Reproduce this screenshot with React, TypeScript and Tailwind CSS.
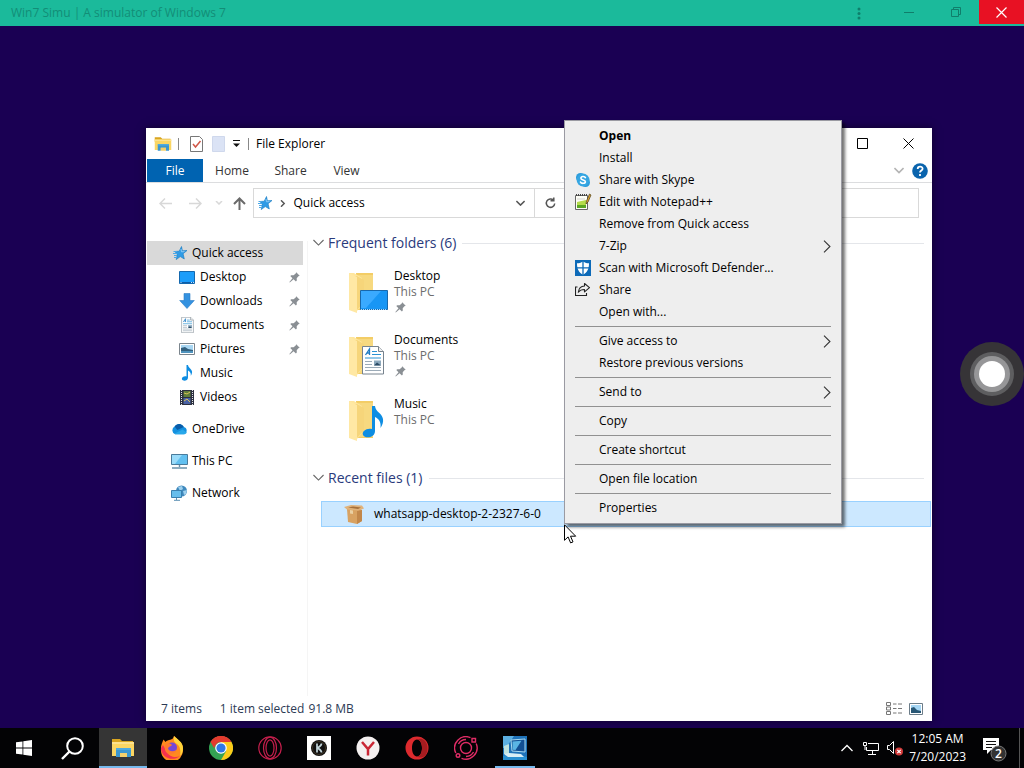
import type { ReactNode } from "react";

const SkypeIcon = () => (
  <svg width="16" height="16" viewBox="0 0 16 16">
    <rect x="1" y="1" width="9" height="9" rx="4.5" fill="#2c9cdb" />
    <rect x="6" y="6" width="9" height="9" rx="4.5" fill="#2c9cdb" />
    <circle cx="8" cy="8" r="6.4" fill="#35a6e2" />
    <path d="M10.400 5.600C9.800 4.200 5.900 4 5.900 6.200c0 2.100 4.500 1.300 4.500 3.500 0 2.200-4.200 2-4.900.4" fill="none" stroke="#fff" strokeWidth="1.6" strokeLinecap="round" />
  </svg>
);

const NotepadIcon = () => (
  <svg width="18" height="18" viewBox="0 0 18 18">
    <path d="M.5 2.500h12v14H.5z" fill="#fdfdf5" stroke="#666" />
    <path d="M2 9l9-2v8H2z" fill="#b4dc4a" />
    <path d="M2 12h9v3H2z" fill="#5aa623" />
    <path d="M1 2h12" stroke="#444" strokeWidth="2" strokeDasharray="1 1" />
    <path d="M2.500 6h7" stroke="#aaa" strokeDasharray="1 1" />
    <path d="M14.500 1l-3 7-.5 3 2-2 3-7z" fill="#e0a72c" stroke="#4a3b18" strokeWidth=".7" />
  </svg>
);

const DefenderIcon = () => (
  <svg width="16" height="16" viewBox="0 0 16 16">
    <path d="M0 0h16v16H0z" fill="#0d6ab8" />
    <path d="M8 1.500c2 1.300 4 1.800 6 1.800 0 5.500-1.500 9-6 11.400C3.500 12.300 2 8.800 2 3.300c2 0 4-.5 6-1.800z" fill="#fff" />
    <path d="M8 1v14M1 7.800h14" stroke="#0d6ab8" strokeWidth="1.300" />
  </svg>
);

const ShareIcon = () => (
  <svg width="16" height="16" viewBox="0 0 16 16" fill="none" stroke="#222" strokeWidth="1.100">
    <path d="M2.500 5H.5v8.500h11V11" />
    <path d="M9.500 1.500l5 4.200-5 4.200V7.500c-3 0-4.700.7-6.200 2.700.5-4 2.700-6 6.200-6.200z" strokeLinejoin="round" />
  </svg>
);

const StarIcon = () => (
  <svg width="16" height="16" viewBox="0 0 16 16">
    <path d="M9.500 1.500l.9 4.300 4.600-.3-3.900 3.200 1.200 5.300-4-2.400-4.100 3 1.100-4.900-2.300-3.200 4.200-.3z" fill="#2f9be6" stroke="#1478c0" strokeWidth=".6" />
    <path d="M1.500 6.500H5M1 8.500h4M2 10.500h3M2 12.500h2.500" stroke="#4aa8e8" />
    <path d="M9 4l.5 2.800 3-.2" stroke="#8ccaf5" fill="none" />
  </svg>
);

const PinIcon = () => (
  <svg width="11" height="11" viewBox="0 0 11 11" fill="#8a8f94">
    <path d="M7.200.3l3.500 3.500-1.300.4-1.700 2 .1 2.300-.9.900-2.300-2.200L.8 10.500l-.4-.4 3.100-3.900L1.300 4.100l.9-.9 2.400.1 2.100-1.800z" />
  </svg>
);

const DesktopIcon = () => (
  <svg width="16" height="13" viewBox="0 0 16 13">
    <path d="M.5.5h15v12H.5z" fill="#1c9dfa" stroke="#1468ae" />
    <path d="M1 11.500h14" stroke="#0d5ca8" />
    <path d="M1.500 11.500h2M12 11.500h3" stroke="#c4e5ff" strokeDasharray="1 1" />
  </svg>
);

const DownloadIcon = () => (
  <svg width="16" height="16" viewBox="0 0 16 16">
    <path d="M5 .5h6v7h4.300L8 15.500.7 7.500H5z" fill="#3492e0" stroke="#2a7cc6" strokeWidth=".6" />
  </svg>
);

const DocumentArt = () => (
  <>
    <path d="M.5.500h16l5 5v22.500H.5z" fill="#fff" stroke="#77838e" />
    <path d="M16.500.5v5h5" fill="#eee" stroke="#77838e" />
    <path d="M3.500 9L7.500 3v6M5 7h3" fill="none" stroke="#217cc4" strokeWidth="1.300" />
    <path d="M10 5.500h5M10 8.500h9M3 12h16" stroke="#2992d3" strokeWidth="1.200" />
    <path d="M3 15.500h7M3 18.500h7M3 21.500h16M3 24.500h16" stroke="#9cabb8" strokeWidth="1.200" />
    <path d="M12 14.500h7v5h-7z" fill="#8da9bd" />
    <path d="M12 19.500l3-3 4 3z" fill="#2c4c66" />
  </>
);

const DocumentIcon = () => (
  <svg width="13" height="16" viewBox="0 0 22 28.500"><DocumentArt /></svg>
);

const PictureIcon = () => (
  <svg width="16" height="12" viewBox="0 0 16 12">
    <path d="M.5.5h15v11H.5z" fill="#fff" stroke="#7b858d" />
    <path d="M2 2h12v8H2z" fill="#a9d7f3" />
    <path d="M2 5l4-1 3 2 5 1v3H2z" fill="#33607e" />
    <path d="M2 8h12v2H2z" fill="#4f93bd" />
  </svg>
);

const MusicArt = () => (
  <path d="M8 0c.5 6 7 7 8 13 .5 3-.5 6-2.500 9 .8-6-1.500-9-5.500-11v14c0 7-10 8-12 4-1.500-4 4-7.500 9-6V0z" fill="#0e8de2" />
);

const MusicIcon = () => (
  <svg width="12" height="16" viewBox="-5 0 22 32"><MusicArt /></svg>
);

const VideoIcon = () => (
  <svg width="14" height="15" viewBox="0 0 14 15">
    <path d="M0 0h14v15H0z" fill="#2d3140" />
    <path d="M1.500 0v15M12.500 0v15" stroke="#e2e5e9" strokeDasharray="1 1" />
    <path d="M3.500 1h7v6h-7z" fill="#607d3a" />
    <path d="M3.500 8h7v6h-7z" fill="#4a62a5" />
    <path d="M4 3l3 1 3-2M4 11l3-2 3 3" stroke="#d8c25a" fill="none" />
  </svg>
);

const CloudIcon = () => (
  <svg width="17" height="12" viewBox="0 0 16 11">
    <path d="M4 10.500a4 4 0 01-.6-7.300A5 5 0 0112 3.500a3.600 3.600 0 010 7z" fill="#1490df" />
    <path d="M3.400 3.200A5 5 0 0112 3.500L6 6.500z" fill="#0a5ca8" />
    <path d="M3 10l8-4 4 3-2 1.500H4z" fill="#28a8ea" />
  </svg>
);

const PcIcon = () => (
  <svg width="17" height="15" viewBox="0 0 17 15">
    <path d="M.5.5h16v10H.5z" fill="#62c0f0" stroke="#4a7b9b" />
    <path d="M1 1h10L4 10H1z" fill="#9bdcfa" />
    <path d="M8.500 11v2M1 14h15" stroke="#6a92ac" strokeWidth="1.400" />
  </svg>
);

const NetworkIcon = () => (
  <svg width="17" height="16" viewBox="0 0 17 16">
    <circle cx="10.500" cy="6" r="5.500" fill="#3f89bd" />
    <path d="M7 2l4-1 1 3-3 2zM12 6l4-1-1 4-2 1z" fill="#9ed0ee" />
    <path d="M.5 5.500h10v7H.5z" fill="#66bdec" stroke="#3a7fae" />
    <path d="M5.500 13v2M3 15.300h6" stroke="#5b8fb3" />
  </svg>
);

const ExplorerIcon = ({ size }: { size: number }) => (
  <svg width={size} height={size} viewBox="0 0 24 24">
    <path d="M1 3h8l2 2h11v4H1z" fill="#d9a520" />
    <path d="M1 6h22v14H1z" fill="#fbd663" />
    <path d="M1 6h22v2H1z" fill="#fde28e" />
    <path d="M5 13h15v8h-4v-4H9v4H5z" fill="#3c97cf" />
    <path d="M5 12h15v2H5z" fill="#4eaae0" />
    <path d="M9 17h7v4H9z" fill="#f4d06b" />
  </svg>
);

const FolderIcon = ({ children }: { children: ReactNode }) => (
  <svg className="mt-1" width="42" height="44" viewBox="0 0 42 44">
    <path d="M8 1h17v37H8z" fill="#f3cd66" />
    <path d="M10 3h15v34H10z" fill="#f7d980" />
    <path d="M1 1h5l8 5v27l-5 6-8-2z" fill="#ffe69d" />
    <path d="M7 4h2l7 4v22l-7 8z" fill="#f6d57a" />
    <path d="M1 1l8 4v36l-8-3z" fill="#ffe8a4" />
    {children}
  </svg>
);

const BoxIcon = () => (
  <svg width="20" height="20" viewBox="0 0 20 20">
    <path d="M3 5l12-1 3 2v11l-5 3-9-2z" fill="#d8a262" />
    <path d="M13 7l5-1v11l-5 3z" fill="#c2874a" />
    <path d="M0 3l7-2 11 .5 2 3-6 2L3 5.500z" fill="#e0b27a" />
    <path d="M4 3.500l5-1 8 1-3 1.500z" fill="#a5713c" />
    <path d="M6 6l3 .5V10l-3-.5z" fill="#ead0a3" />
  </svg>
);

const Chevron = ({ dir, color, w = 11, sw = 1.2 }: { dir: "down" | "right" | "up"; color: string; w?: number; sw?: number }) => (
  <svg
    width={dir === "right" ? w / 2 + 2 : w}
    height={dir === "right" ? w : w / 2 + 2}
    viewBox={dir === "right" ? "0 0 7 12" : "0 0 12 7"}
    fill="none"
    stroke={color}
    strokeWidth={sw}
  >
    <path d={dir === "right" ? "M.5.5L6 6 .5 11.500" : dir === "down" ? "M.5.5L6 6l5.500-5.500" : "M.5 6.500L6 1l5.500 5.500"} />
  </svg>
);

type MenuEntry = { label: string; icon?: ReactNode; bold?: boolean; sub?: boolean };
const menuGroups: MenuEntry[][] = [
  [
    { label: "Open", bold: true },
    { label: "Install" },
    { label: "Share with Skype", icon: <SkypeIcon /> },
    { label: "Edit with Notepad++", icon: <NotepadIcon /> },
    { label: "Remove from Quick access" },
    { label: "7-Zip", sub: true },
    { label: "Scan with Microsoft Defender...", icon: <DefenderIcon /> },
    { label: "Share", icon: <ShareIcon /> },
    { label: "Open with..." },
  ],
  [{ label: "Give access to", sub: true }, { label: "Restore previous versions" }],
  [{ label: "Send to", sub: true }],
  [{ label: "Copy" }],
  [{ label: "Create shortcut" }],
  [{ label: "Open file location" }],
  [{ label: "Properties" }],
];

function ContextMenu() {
  return (
    <div role="menu" className="absolute left-[564px] top-[120px] w-[278px] border border-[#9a9aa2] bg-[#eeeeee] px-[10px] py-1 shadow-[3px_3px_3px_rgba(0,0,0,0.55)]">
      {menuGroups.map((group, i) => (
        <div key={i} role="group" className={i > 0 ? "before:my-[3px] before:block before:h-px before:bg-[#919191]" : ""}>
          {group.map((item) => (
            <button key={item.label} role="menuitem" className="flex h-[22px] w-full items-center text-left">
              <span className="flex w-6 shrink-0">{item.icon}</span>
              <span className={item.bold ? "grow font-bold" : "grow"}>{item.label}</span>
              {item.sub && <Chevron dir="right" color="#333" w={13} sw={1} />}
            </button>
          ))}
        </div>
      ))}
    </div>
  );
}

const quickLinks = [
  { label: "Desktop", icon: <DesktopIcon />, pinned: true },
  { label: "Downloads", icon: <DownloadIcon />, pinned: true },
  { label: "Documents", icon: <DocumentIcon />, pinned: true },
  { label: "Pictures", icon: <PictureIcon />, pinned: true },
  { label: "Music", icon: <MusicIcon />, pinned: false },
  { label: "Videos", icon: <VideoIcon />, pinned: false },
];

const places = [
  { label: "OneDrive", icon: <CloudIcon /> },
  { label: "This PC", icon: <PcIcon /> },
  { label: "Network", icon: <NetworkIcon /> },
];

function Sidebar() {
  return (
    <nav className="w-[162px] shrink-0 border-r border-[#f5f5f5] pl-px">
      <a href="#quick" className="mr-1 flex h-6 items-center gap-1 bg-[#d9d9d9] pl-[25px]">
        <StarIcon />
        Quick access
      </a>
      {quickLinks.map((l) => (
        <a key={l.label} href="#folder" className="flex h-6 items-center pl-8 pr-[7px]">
          <span className="mr-[5px] flex w-4 justify-center">{l.icon}</span>
          <span className="grow">{l.label}</span>
          {l.pinned && <PinIcon />}
        </a>
      ))}
      {places.map((p) => (
        <a key={p.label} href="#place" className="mt-2 flex h-6 items-center gap-1 pl-6">
          <span className="flex w-[17px]">{p.icon}</span>
          {p.label}
        </a>
      ))}
    </nav>
  );
}

const folders = [
  {
    name: "Desktop",
    pinned: true,
    art: (
      <>
        <path d="M12.500 18.500h27v19h-27z" fill="#1796f5" stroke="#1868ac" />
        <path d="M13 19h20L18 36h-5z" fill="#3aaaff" />
        <path d="M13 37.500h26" stroke="#a9dcff" strokeDasharray="1 1" />
      </>
    ),
  },
  { name: "Documents", pinned: true, art: <g transform="translate(14 10)"><DocumentArt /></g> },
  { name: "Music", pinned: false, art: <g transform="translate(19 6)"><MusicArt /></g> },
];

const SectionTitle = ({ children }: { children: ReactNode }) => (
  <h2 className="flex h-6 items-center pl-[5px] pr-2 text-[14px] text-[#2a3a7c]">
    <span className="mr-1"><Chevron dir="down" color="#666" /></span>
    {children}
    <span className="ml-[6px] h-px grow bg-[#e4e6ea]" />
  </h2>
);

function ExplorerWindow() {
  return (
    <section className="flex grow flex-col bg-white text-black shadow-[0_0_8px_rgba(0,0,0,0.5)]">
      <header className="flex h-[31px] items-center pl-2">
        <ExplorerIcon size={18} />
        <span className="ml-[6px] h-3 w-px bg-[#888]" />
        <svg className="ml-[11px]" width="13" height="16" viewBox="0 0 13 16" fill="none">
          <path d="M.5.5h9l3 3v12H.5z" fill="#fff" stroke="#777" />
          <path d="M3 8l2.500 3L10.500 5" stroke="#d05748" strokeWidth="1.500" />
        </svg>
        <svg className="ml-[9px]" width="13" height="16" viewBox="0 0 13 16">
          <path d="M.5.5h12v15H.5z" fill="#dbe3f5" stroke="#cfd8ec" />
        </svg>
        <svg className="ml-[7px]" width="9" height="8" viewBox="0 0 9 8">
          <path d="M1 .5h7" stroke="#111" />
          <path d="M1 3.500h7L4.500 7z" fill="#111" />
        </svg>
        <span className="ml-[7px] h-3 w-px bg-[#888]" />
        <h1 className="ml-[7px] grow">File Explorer</h1>
        <button aria-label="Maximize" className="flex w-[46px] justify-center">
          <svg width="11" height="11" fill="none" stroke="#000"><path d="M.5.5h10v10H.5z" /></svg>
        </button>
        <button aria-label="Close" className="mr-px flex w-[46px] justify-center">
          <svg width="11" height="11" fill="none" stroke="#000"><path d="M.5.5l10 10M10.500.5l-10 10" /></svg>
        </button>
      </header>

      <div className="flex h-6 items-stretch border-b border-[#dcdddf] pl-px text-[#333]">
        <button className="w-14 bg-[#0063b1] text-white">File</button>
        <button className="w-[58px]">Home</button>
        <button className="w-[59px]">Share</button>
        <button className="w-[53px]">View</button>
        <span className="grow" />
        <button aria-label="Expand ribbon" className="px-2"><Chevron dir="down" color="#b4b4b4" w={10} sw={2} /></button>
        <button aria-label="Help" className="mr-1">
          <svg width="16" height="16" viewBox="0 0 16 16">
            <circle cx="8" cy="8" r="7.800" fill="#0a64ad" />
            <path d="M5.700 6c0-3.200 4.900-3 4.900-.3C10.600 7.500 8 7.500 8 9.500M8 11v2" fill="none" stroke="#fff" strokeWidth="1.800" />
          </svg>
        </button>
      </div>

      <div className="flex h-10 items-center px-[13px]">
        <button aria-label="Back" className="w-[30px]">
          <svg width="13" height="11" fill="none" stroke="#d8d8d8" strokeWidth="1.500"><path d="M13 5.500H1M6 .5l-5 5 5 5" /></svg>
        </button>
        <button aria-label="Forward" className="w-[26px]">
          <svg width="13" height="11" fill="none" stroke="#d8d8d8" strokeWidth="1.500"><path d="M0 5.500h12M7 .5l5 5-5 5" /></svg>
        </button>
        <button aria-label="Recent locations" className="w-[18px]">
          <svg width="8" height="4" fill="none" stroke="#d8d8d8" strokeWidth="1.500"><path d="M1 0l3 3 3-3" /></svg>
        </button>
        <button aria-label="Up" className="w-5">
          <svg width="13" height="13" fill="none" stroke="#6a6a6a" strokeWidth="2"><path d="M6.500 13V1.500M1 7l5.500-5.500L12 7" /></svg>
        </button>
        <div className="flex h-[30px] w-[313px] items-center border border-[#d9d9d9] pl-[3px]">
          <StarIcon />
          <span className="mx-[7px]"><Chevron dir="right" color="#555" w={7} sw={2.500} /></span>
          <span className="grow pl-px">Quick access</span>
          <button aria-label="Previous locations" className="px-[9px]"><Chevron dir="down" color="#555" w={9} sw={2} /></button>
          <button aria-label="Refresh" className="flex h-full w-[31px] items-center justify-center border-l border-[#d9d9d9]">
            <svg width="11" height="12" viewBox="0 0 11 12" fill="none" stroke="#555" strokeWidth="1.500">
              <path d="M8.500 3.200A4.200 4.200 0 109.700 6.500M8.800.500v3.200H5.500" />
            </svg>
          </button>
        </div>
        <label className="ml-3 flex min-w-0 grow">
          <input type="search" aria-label="Search Quick access" className="h-[30px] min-w-0 grow border border-[#d9d9d9] px-2 outline-none" />
        </label>
      </div>

      <div className="flex grow">
        <div className="flex pt-[18px]"><Sidebar /></div>
        <main className="grow pt-2">
          <SectionTitle>Frequent folders (6)</SectionTitle>
          <ul className="pl-10 pt-[13px]">
            {folders.map((f) => (
              <li key={f.name} className="flex h-16 gap-1">
                <FolderIcon>{f.art}</FolderIcon>
                <div className="leading-4">
                  <p>{f.name}</p>
                  <p className="text-[#6d6d6d]">This PC</p>
                  {f.pinned && <span className="flex pt-[2px] pl-px"><PinIcon /></span>}
                </div>
              </li>
            ))}
          </ul>
          <div className="mt-[6px]"><SectionTitle>Recent files (1)</SectionTitle></div>
          <button className="ml-[13px] mt-[11px] flex h-[26px] w-[calc(100%-14px)] items-center gap-[10px] border border-[#99d1ff] bg-[#cce8ff] pl-[22px]">
            <BoxIcon />
            whatsapp-desktop-2-2327-6-0
          </button>
        </main>
      </div>

      <footer className="flex h-[25px] items-center pl-[15px] pr-[9px] text-[#2c3a55]">
        <span className="mr-[18px]">7 items</span>
        <span className="mr-1">1 item selected</span>
        <span className="grow">91.8 MB</span>
        <button aria-label="Details view" className="mr-[7px]">
          <svg width="16" height="13" viewBox="0 0 16 13" fill="none" stroke="#777">
            <path d="M.5.5h4v3h-4zM.5 5h4v3h-4zM.5 9.500h4v3h-4zM7 2h3.500M12 2h4M7 6.500h3.500M12 6.500h4M7 11h3.500M12 11h4" />
          </svg>
        </button>
        <button aria-label="Large icons view">
          <svg width="14" height="12" viewBox="0 0 14 12">
            <path d="M.5.5h13v11H.5z" fill="#fff" stroke="#6b7c88" />
            <path d="M2 2h10v8H2z" fill="#a6d7f5" />
            <path d="M2 5l3-1 3 3 4 1v2H2z" fill="#285775" />
          </svg>
        </button>
      </footer>
    </section>
  );
}

const apps: { name: string; bar?: string; active?: boolean; icon: ReactNode }[] = [
  { name: "File Explorer", active: true, bar: "w-12", icon: <ExplorerIcon size={24} /> },
  {
    name: "Firefox",
    icon: (
      <svg width="24" height="24" viewBox="0 0 24 24">
        <path d="M14 0c2 1 3 3 4 4.500 3 1.500 5.500 5 5 9.500a11 11 0 01-22 1C.5 10 2 7 3.500 3.500L5.500 6C8 3 13 5 14 0z" fill="#ff8a1e" />
        <path d="M14 0c3 3 9 6 9 12 0 4-1 6-3 8 1-5 0-10-3-12-2-1-4-3-3-8z" fill="#ffd43a" />
        <path d="M1 12c0 10 12 14 19 8-4 2-11 1-13-4L3 9z" fill="#f6314f" />
        <circle cx="12" cy="11.500" r="5" fill="#7547d8" />
        <path d="M5.500 8c2-1.500 5-1 6.500 1-1 1.500-3.500 1.500-4 3.500 1 3 5 3.500 8 1.500-1 5-7 6-10 2-1.500-2-1.500-5-.5-8z" fill="#ff7b2c" />
      </svg>
    ),
  },
  {
    name: "Chrome",
    icon: (
      <svg width="24" height="24" viewBox="0 0 24 24">
        <circle cx="12" cy="12" r="12" fill="#34a353" />
        <path d="M12 12L1.600 6a12 12 0 0120.800 0z" fill="#e33b2e" />
        <path d="M12 6h10.400A12 12 0 0112 24l5.200-9z" fill="#fccb1a" />
        <path d="M1.600 6L6.800 15 12 12V6z" fill="#34a353" />
        <path d="M1.600 6A12 12 0 0112 0a12 12 0 0110.400 6H12a6 6 0 00-5.500 3.500L5 12z" fill="#e33b2e" />
        <circle cx="12" cy="12" r="5.800" fill="#fff" />
        <circle cx="12" cy="12" r="4.600" fill="#2f78e6" />
      </svg>
    ),
  },
  {
    name: "Opera GX",
    icon: (
      <svg width="24" height="24" viewBox="0 0 24 24" fill="none" stroke="#c41f4c" strokeWidth="1.200">
        <circle cx="12" cy="12" r="11.200" />
        <ellipse cx="12" cy="12" rx="6.500" ry="10.800" />
        <ellipse cx="12" cy="12" rx="4" ry="8.200" />
      </svg>
    ),
  },
  {
    name: "Klwp",
    icon: (
      <svg width="24" height="24" viewBox="0 0 24 24">
        <path d="M0 0h24v24H0z" fill="#fff" />
        <circle cx="12" cy="12" r="8" fill="#111" />
        <circle cx="12" cy="12" r="6.500" fill="none" stroke="#5c4c2c" strokeWidth=".6" />
        <path d="M10 7.500v9M14.500 7.500c0 2.500-2.500 3.500-4 4.500 1.500 1 4 2 4 4.500" stroke="#c3d6da" strokeWidth="1.700" fill="none" />
      </svg>
    ),
  },
  {
    name: "Yandex",
    icon: (
      <svg width="24" height="24" viewBox="0 0 24 24">
        <circle cx="12" cy="12" r="11.500" fill="#f4f0f0" />
        <path d="M6 6l6 7 6-7M12 12.500V19.500" fill="none" stroke="#c92634" strokeWidth="2.500" />
      </svg>
    ),
  },
  {
    name: "Opera",
    icon: (
      <svg width="24" height="24" viewBox="0 0 24 24" fillRule="evenodd">
        <path d="M12 .5a11.500 11.500 0 100 23 11.500 11.500 0 000-23zm0 3c3 0 5 4 5 8.500s-2 8.500-5 8.500S7 16.500 7 12s2-8.500 5-8.500z" fill="#dc2a2e" />
        <path d="M12 3.500c3 0 5 4 5 8.500s-2 8.500-5 8.500c3 2 8 1 9.500-3 2-5 1-10-2-13-2-2-5-2-7.500-1z" fill="#a51c20" />
      </svg>
    ),
  },
  {
    name: "Orbit",
    icon: (
      <svg width="24" height="24" viewBox="0 0 24 24" fill="none" stroke="#e02c66" strokeWidth="1.400">
        <circle cx="12" cy="12" r="5.500" />
        <path d="M16.500 1.700A11.300 11.300 0 001.800 17M7.500 22.300A11.300 11.300 0 0022.200 7.500M4.500 8A8.600 8.600 0 0112 3.500M19.500 16a8.600 8.600 0 01-7.500 4.500" />
        <path d="M18 2.500h3.500V6H18z" />
        <circle cx="4" cy="19.500" r="1.800" />
      </svg>
    ),
  },
  {
    name: "Win7 Simu",
    bar: "w-10",
    icon: (
      <svg width="24" height="24" viewBox="0 0 24 24">
        <path d="M0 0h24v24H0z" fill="#1f72b8" />
        <path d="M0 0h11L3 12H0z" fill="#5cb0e2" />
        <path d="M0 20l8-3 16 4v3H0z" fill="#2a8fd0" />
        <path d="M8 4l14-1v13l-13-1z" fill="#124f93" stroke="#a8d9f0" />
        <path d="M9.500 5.500l9-.8-6 9.300-3-.3z" fill="#5ab4e4" />
        <path d="M1 10l5-2v10H1z" fill="#bfe3e0" />
        <path d="M1 18l5-1 12 1 3 3H5z" fill="#d9eef5" />
      </svg>
    ),
  },
];

function Taskbar() {
  return (
    <footer className="flex h-10 items-stretch bg-[#030305] text-white">
      <button aria-label="Start" className="flex w-12 items-center justify-center">
        <svg width="16" height="16" viewBox="0 0 16 16" fill="#fff">
          <path d="M0 2.300l6.500-.9v6.200H0zM7.300 1.300L16 0v7.600H7.300zM0 8.400h6.500v6.200L0 13.700zM7.300 8.400H16V16l-8.700-1.200z" />
        </svg>
      </button>
      <button aria-label="Search" className="mr-[3px] flex w-12 items-center justify-center">
        <svg width="23" height="23" viewBox="0 0 23 23" fill="none" stroke="#fff" strokeWidth="2">
          <circle cx="14" cy="9" r="7.800" />
          <path d="M8.500 14.500L1 22" strokeWidth="2.400" />
        </svg>
      </button>
      <div className="flex gap-px">
        {apps.map((a) => (
          <button
            key={a.name}
            aria-label={a.name}
            className={a.active ? "flex w-12 flex-col items-center bg-[#353535]" : "flex w-12 flex-col items-center"}
          >
            <span className="flex grow items-center">{a.icon}</span>
            {a.bar && <span className={`-mt-[2px] h-[2px] bg-[#76b9ed] ${a.bar}`} />}
          </button>
        ))}
      </div>
      <div className="ml-auto flex items-center">
        <button aria-label="Hidden icons" className="mr-[10px]"><Chevron dir="up" color="#fff" w={12} sw={1.300} /></button>
        <svg className="mr-2" width="16" height="14" viewBox="0 0 16 14" fill="none" stroke="#fff">
          <path d="M5 2.500h10.500v7H3.500V6M9.500 10v3M5 13.500h8M.5 1.500h3v3h-3zM2 5v4" />
        </svg>
        <svg className="mr-[6px]" width="16" height="15" viewBox="0 0 16 15" fill="none">
          <path d="M.5 4.500h2l4-4v12l-4-4h-2z" stroke="#fff" />
          <circle cx="12" cy="10.500" r="4" fill="#d23b3b" />
          <path d="M10.300 8.800l3.400 3.400M13.700 8.800l-3.400 3.400" stroke="#fff" strokeWidth="1.200" />
        </svg>
        <div className="mr-4 text-center leading-[18px]">
          <p>12:05 AM</p>
          <p>7/20/2023</p>
        </div>
        <button aria-label="2 notifications" className="mr-[11px]">
          <svg width="26" height="28" viewBox="0 0 26 28">
            <path d="M1 4h16v12H9l-4 4v-4H1z" fill="#fff" />
            <path d="M4 7.500h10M4 10.500h10M4 13.500h6" stroke="#111" />
            <circle cx="16.500" cy="19.500" r="7.500" fill="#333" stroke="#777" />
            <text x="16.500" y="24" fontSize="12" fontWeight="600" textAnchor="middle" fill="#fff">2</text>
          </svg>
        </button>
        <span className="mr-1 h-10 w-px bg-[#555]" />
      </div>
    </footer>
  );
}

export default function App() {
  return (
    <div className="relative flex min-h-screen flex-col overflow-hidden bg-[#1a0053] font-['Open_Sans','Noto_Sans',sans-serif] text-[12px] leading-4">
      <header className="flex h-[26px] items-start bg-[#1bba9b] pl-[11px] text-[#138d77]">
        <span className="grow pt-[5px]">Win7 Simu | A simulator of Windows 7</span>
        <button aria-label="More" className="flex h-[26px] w-10 items-center justify-center">
          <svg width="4" height="13" fill="#0e7f6b"><circle cx="2" cy="2" r="1.500" /><circle cx="2" cy="6.500" r="1.500" /><circle cx="2" cy="11" r="1.500" /></svg>
        </button>
        <button aria-label="Minimize app" className="ml-[6px] flex h-6 w-12 items-center justify-center">
          <svg width="10" height="1"><path d="M0 .5h10" stroke="#107e6b" /></svg>
        </button>
        <button aria-label="Restore app" className="flex h-6 w-[46px] items-center justify-center">
          <svg width="10" height="10" fill="none" stroke="#107e6b"><path d="M.5 2.500h7v7h-7zM2.500 2.500v-2h7v7h-2" /></svg>
        </button>
        <button aria-label="Close app" className="flex h-6 w-[45px] items-center justify-center bg-[#e81123]">
          <svg width="11" height="11" fill="none" stroke="#fff" strokeWidth="1.200"><path d="M.5.5l10 10M10.500.5l-10 10" /></svg>
        </button>
      </header>

      <div className="flex grow pb-[7px] pl-[146px] pr-[92px] pt-[102px]">
        <ExplorerWindow />
      </div>

      <Taskbar />

      <ContextMenu />

      <svg className="absolute left-[564px] top-[524px]" width="13" height="20" viewBox="0 0 13 20">
        <path d="M.5.800v15.500l3.600-3.400 2.500 6 2.400-1-2.500-5.700h5.200z" fill="#fff" stroke="#000" />
      </svg>

      <svg className="absolute right-0 top-[342px]" width="64" height="64" viewBox="0 0 64 64">
        <circle cx="32" cy="32" r="32" fill="#363437" />
        <circle cx="32" cy="32" r="22" fill="#5e5e60" />
        <circle cx="32" cy="32" r="18" fill="#969698" />
        <circle cx="32" cy="32" r="13" fill="#fff" />
      </svg>
    </div>
  );
}
